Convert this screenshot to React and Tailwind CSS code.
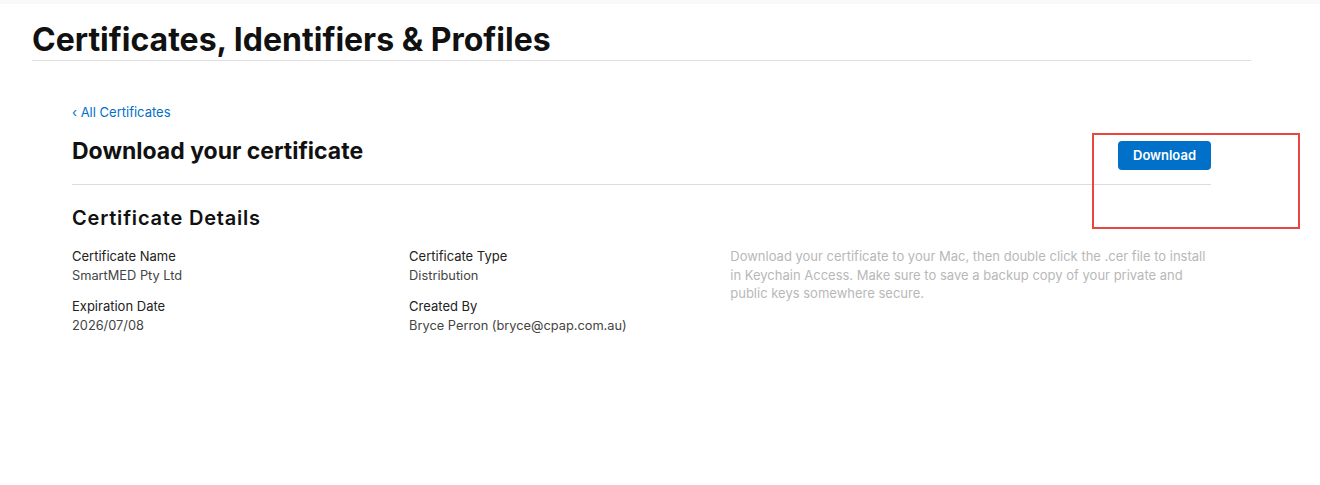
import React from 'react';

const details = [
    [
        { label: 'Certificate Name', value: 'SmartMED Pty Ltd' },
        { label: 'Expiration Date', value: '2026/07/08' },
    ],
    [
        { label: 'Certificate Type', value: 'Distribution' },
        { label: 'Created By', value: 'Bryce Perron (bryce@cpap.com.au)' },
    ],
];

export default function App() {
    return (
        <div className="relative min-h-[485px] bg-white font-['Inter','Liberation_Sans',sans-serif] text-[#1d1d1f]">
            <div className="h-[4px] bg-[#f9f9f9]" />

            <div className="pl-8 pr-[69px]">
                <h1 className="pt-[16px] text-[32px] font-bold leading-[40px] text-[#111]">
                    Certificates, Identifiers &amp; Profiles
                </h1>
                <div className="h-px bg-[#e0e0e0]" />
            </div>

            <div className="pl-[72px] pr-[109px] pt-[42px]">
                <a href="#" className="block text-[13px] leading-[18px] text-[#0070c9]">
                    ‹ All Certificates
                </a>

                <div className="mt-[15px] flex items-start justify-between">
                    <h2 className="text-[23px] font-bold leading-[30px] text-[#111]">Download your certificate</h2>
                    <button className="mt-[5px] h-[29px] w-[93px] rounded-[4px] bg-[#0070c9] text-[13px] font-semibold text-white">
                        Download
                    </button>
                </div>

                <div className="mt-[14px] h-px bg-[#dcdcdc]" />

                <h3 className="mt-[20px] text-[20px] font-semibold leading-[26px] tracking-[0.04em] text-[#111]">
                    Certificate Details
                </h3>

                <div className="mt-[16px] flex">
                    {details.map((col, i) => (
                        <div key={i} className={i === 0 ? 'w-[338px]' : 'w-[321px]'}>
                            {col.map((item) => (
                                <div key={item.label} className="mb-[12px]">
                                    <div className="text-[13px] leading-[19px] text-[#222]">{item.label}</div>
                                    <div className="text-[12.8px] leading-[19px] text-[#444]">{item.value}</div>
                                </div>
                            ))}
                        </div>
                    ))}
                    <p className="ml-px w-[482px] text-[13px] leading-[18.5px] text-[#b8b8b8]">
                        Download your certificate to your Mac, then double click the .cer file to install in Keychain Access. Make sure to save a backup copy of your private and public keys somewhere secure.
                    </p>
                </div>
            </div>

            {/* annotation box */}
            <div className="absolute left-[1092px] top-[133px] h-[96px] w-[208px] border-2 border-[#e9473d]" />
        </div>
    );
}
